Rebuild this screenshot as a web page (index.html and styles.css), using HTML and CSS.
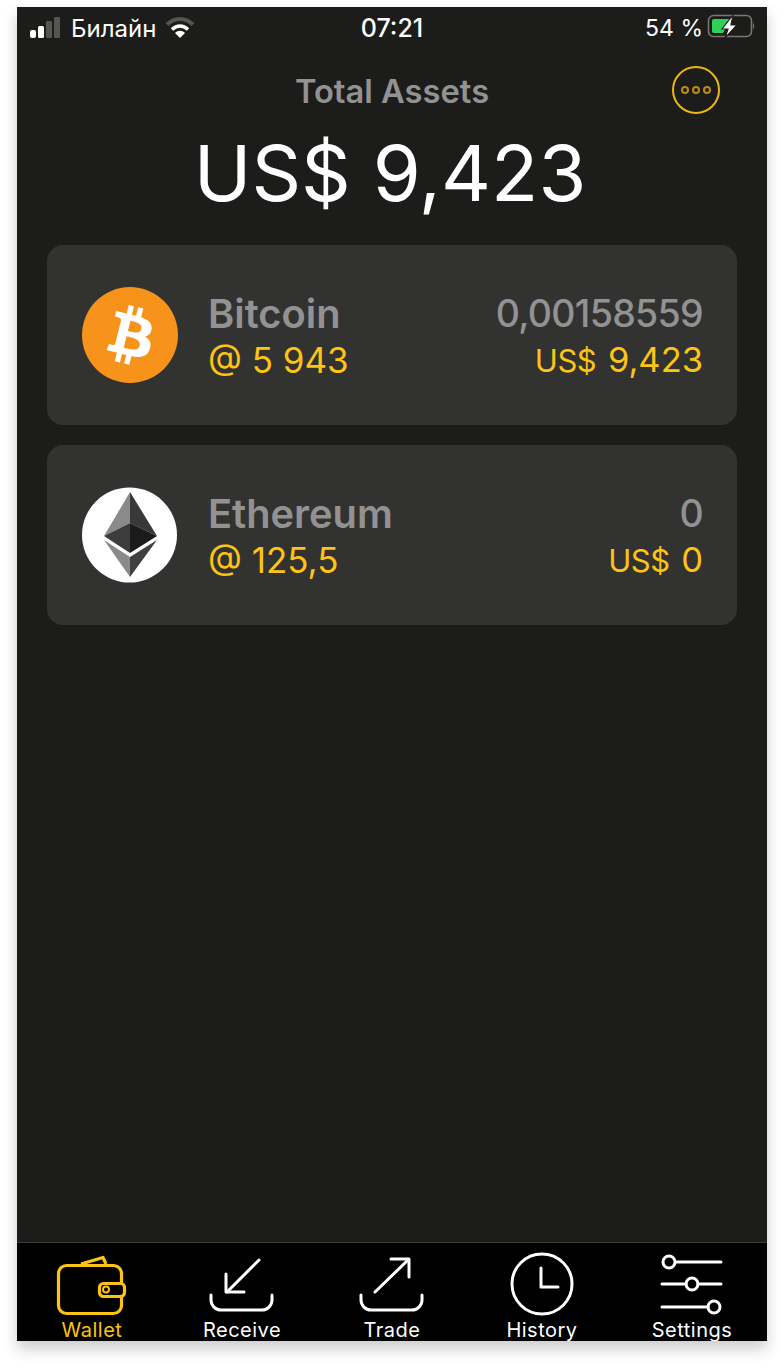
FILE: index.html
```html
<!DOCTYPE html>
<html lang="en">
  <head>
    <meta charset="UTF-8" />
    <meta name="viewport" content="width=device-width, initial-scale=1.0" />
    <title>Wallet</title>
    <link rel="stylesheet" href="styles.css">
  </head>
  <body>
    <div id="phone">
      <div id="status">
        <div class="status-left">
          <svg class="signal" width="34" height="22" viewBox="0 0 34 22">
            <rect x="1" y="13" width="6" height="8" rx="2" fill="#fff" />
            <rect x="9" y="9" width="6" height="12" rx="1.5" fill="#fff" />
            <rect x="17" y="4" width="6" height="17" rx="1" fill="#565650" />
            <rect x="25" y="0" width="6" height="21" rx="1" fill="#565650" />
          </svg>
          <span>Билайн</span>
          <svg class="wifi" width="30" height="24" viewBox="0 0 30 24">
            <path d="M2 8.5C10 1 20 1 28 8.5" fill="none" stroke="#565650" stroke-width="4" />
            <path d="M7 13.5C12 9 18 9 23 13.5" fill="none" stroke="#fff" stroke-width="3.6" />
            <path d="M10 17C13 14 17 14 20 17L15 22Z" fill="#fff" />
          </svg>
        </div>
        <div class="status-time">07:21</div>
        <div class="status-right">
          <span>54 %</span>
          <svg class="battery" width="48" height="24" viewBox="0 0 48 24">
            <rect x="1.500" y="1.500" width="43" height="21" rx="5" fill="none" stroke="#777" stroke-width="1.6" />
            <path d="M5 7a2 2 0 0 1 2-2h17l-8 14h-9a2 2 0 0 1-2-2Z" fill="#30d158" />
            <path d="M46 9c1.500.5 1.500 5.500 0 6Z" fill="#777" />
            <path d="M26 1L15 15h6l-3 9L30 11h-6Z" fill="#fff" stroke="#1c1c1b" stroke-width="1.2" />
          </svg>
        </div>
      </div>

      <div id="header">
        <div class="title">Total Assets</div>
        <div class="total">US$ 9,423</div>
        <a href="javascript:;" id="more"><span></span><span></span><span></span></a>
      </div>

      <div id="list">
        <div class="card">
          <svg class="coin" width="96" height="96" viewBox="0 0 32 32">
            <circle cx="16" cy="16" r="16" fill="#f7931a" />
            <path fill="#fff" fill-rule="evenodd" d="M23.189 14.02c.314-2.096-1.283-3.223-3.465-3.975l.708-2.84-1.728-.43-.69 2.765c-.454-.114-.92-.22-1.385-.326l.695-2.783L15.596 6l-.708 2.839c-.376-.086-.746-.17-1.104-.26l.002-.009-2.384-.595-.46 1.846s1.283.294 1.256.312c.7.175.826.638.805 1.006l-.806 3.235c.048.012.11.03.18.057l-.183-.045-1.13 4.532c-.086.212-.303.531-.793.41.018.025-1.256-.313-1.256-.313l-.858 1.978 2.25.561c.418.105.828.215 1.231.318l-.715 2.872 1.727.43.708-2.84c.472.127.93.245 1.378.357l-.706 2.828 1.728.43.715-2.866c2.948.558 5.164.333 6.097-2.333.752-2.146-.037-3.385-1.588-4.192 1.13-.26 1.98-1.003 2.207-2.538zm-3.95 5.538c-.533 2.147-4.148.986-5.32.695l.95-3.805c1.172.293 4.929.872 4.37 3.11zm.535-5.569c-.487 1.953-3.495.96-4.47.717l.86-3.45c.975.243 4.118.696 3.61 2.733z" />
          </svg>
          <div class="names">
            <div class="name">Bitcoin</div>
            <div class="rate">@ 5 943</div>
          </div>
          <div class="values">
            <div class="amount">0,00158559</div>
            <div class="worth"><span class="cur">US$</span> 9,423</div>
          </div>
        </div>
        <div class="card">
          <svg class="coin" width="96" height="96" viewBox="0 0 96 96">
            <circle cx="47.500" cy="48" r="47.500" fill="#fff" />
            <polygon points="48,5 22,49 48,36" fill="#8a8a8a" />
            <polygon points="48,5 75,49 48,36" fill="#383838" />
            <polygon points="22,49 48,36 48,66" fill="#3c3c3c" />
            <polygon points="75,49 48,36 48,66" fill="#1b1b1b" />
            <polygon points="22,53 48,70 48,90" fill="#8a8a8a" />
            <polygon points="75,53 48,70 48,90" fill="#404040" />
          </svg>
          <div class="names">
            <div class="name">Ethereum</div>
            <div class="rate">@ 125,5</div>
          </div>
          <div class="values">
            <div class="amount">0</div>
            <div class="worth"><span class="cur">US$</span> 0</div>
          </div>
        </div>
      </div>

      <div id="tabs">
        <div class="tab on">
          <svg width="80" height="68" viewBox="0 0 80 68" fill="none" stroke="currentColor" stroke-width="3.200" stroke-linejoin="round">
            <path d="M29 12L51 5.500L54 12" />
            <rect x="6.500" y="13.500" width="63" height="48" rx="8" />
            <rect x="47.500" y="31.500" width="25" height="13" rx="4" fill="#000" />
            <circle cx="54" cy="37.500" r="3" stroke-width="2" />
          </svg>
          <span>Wallet</span>
        </div>
        <div class="tab">
          <svg width="80" height="68" viewBox="0 0 80 68" fill="none" stroke="currentColor" stroke-width="3" stroke-linecap="round" stroke-linejoin="round">
            <path d="M57 8L25 40" />
            <path d="M24 22V40H42" />
            <path d="M9 43V48A10 10 0 0 0 19 58H60A10 10 0 0 0 70 48V43" />
          </svg>
          <span>Receive</span>
        </div>
        <div class="tab">
          <svg width="80" height="68" viewBox="0 0 80 68" fill="none" stroke="currentColor" stroke-width="3" stroke-linecap="round" stroke-linejoin="round">
            <path d="M23 40L56 8" />
            <path d="M39 7H57V25" />
            <path d="M9 43V48A10 10 0 0 0 19 58H60A10 10 0 0 0 70 48V43" />
          </svg>
          <span>Trade</span>
        </div>
        <div class="tab">
          <svg width="80" height="68" viewBox="0 0 80 68" fill="none" stroke="currentColor" stroke-width="3" stroke-linecap="round" stroke-linejoin="round">
            <circle cx="40" cy="32" r="30" />
            <path d="M39 16V35H56" />
          </svg>
          <span>History</span>
        </div>
        <div class="tab">
          <svg width="80" height="68" viewBox="0 0 80 68" fill="none" stroke="currentColor" stroke-width="3" stroke-linecap="round">
            <path d="M24 10H69M10 32H34M46 32H69M10 55H56" />
            <circle cx="17" cy="10" r="6" />
            <circle cx="40" cy="32" r="6" />
            <circle cx="62" cy="55" r="6" />
          </svg>
          <span>Settings</span>
        </div>
      </div>
    </div>
  </body>
</html>
```

FILE: styles.css
```css
* {
  box-sizing: border-box;
}
body {
  margin: 0;
  padding: 7px 17px 27px;
  background: #fff;
  font-family: Inter, "Noto Sans", sans-serif;
}
a {
  text-decoration: none;
}
#phone {
  position: relative;
  display: flex;
  flex-direction: column;
  width: 750px;
  height: 1334px;
  overflow: hidden;
  background: #1c1c1b;
  box-shadow: 0 8px 14px rgba(0, 0, 0, 0.2);
}
#status {
  display: grid;
  grid-template-columns: 1fr auto 1fr;
  align-items: center;
  height: 42px;
  padding: 0 12px;
  font-size: 24px;
  color: #fff;
}
.status-left {
  display: flex;
  align-items: center;
  gap: 8px;
}
.wifi {
  margin-left: 1px;
}
.status-time {
  font-size: 25px;
  font-weight: 500;
}
.status-right {
  display: flex;
  align-items: center;
  justify-content: flex-end;
  gap: 4px;
  font-size: 23px;
}
.battery {
  margin-top: -4px;
}
#header {
  position: relative;
  padding-top: 20px;
  text-align: center;
}
.title {
  height: 44px;
  line-height: 44px;
  font-size: 32.700px;
  font-weight: 600;
  color: #929292;
}
.total {
  height: 128px;
  margin-top: 4px;
  padding: 0 4px 16px 0;
  line-height: 112px;
  font-size: 77.500px;
  color: #fff;
}
#more {
  position: absolute;
  top: 17px;
  right: 47px;
  display: flex;
  align-items: center;
  justify-content: center;
  gap: 3px;
  width: 48px;
  height: 48px;
  border: 2px solid #eeb515;
  border-radius: 50%;
}
#more span {
  width: 8px;
  height: 8px;
  border: 2px solid #b98c18;
  border-radius: 50%;
}
#list {
  display: flex;
  flex: 1;
  flex-direction: column;
  gap: 20px;
  padding: 0 30px;
}
.card {
  display: flex;
  align-items: center;
  height: 180px;
  padding: 0 34px 0 35px;
  border-radius: 16px;
  background: #323231;
}
.names {
  flex: 1;
  margin-left: 30px;
  padding-top: 4px;
}
.values {
  padding-top: 4px;
  text-align: right;
}
.name,
.amount {
  height: 46px;
  line-height: 46px;
  font-size: 39.800px;
  font-weight: 600;
  color: #929292;
}
.amount {
  font-size: 37.500px;
  font-weight: 500;
  letter-spacing: -0.700px;
}
.rate,
.worth {
  height: 46px;
  line-height: 46px;
  font-size: 35px;
  color: #fdc315;
}
.worth {
  font-size: 34.500px;
  word-spacing: 2px;
}
.cur {
  font-size: 31px;
  letter-spacing: -0.500px;
}
#tabs {
  display: grid;
  grid-template-columns: repeat(5, 1fr);
  height: 99px;
  padding-top: 9px;
  border-top: 1px solid #3d3d3a;
  background: #000;
}
.tab {
  display: flex;
  flex-direction: column;
  align-items: center;
  color: #fff;
  font-size: 20px;
  letter-spacing: 0.500px;
}
.tab svg {
  flex: none;
}
.tab span {
  line-height: 20px;
}
.tab.on {
  color: #fdc315;
}
```
